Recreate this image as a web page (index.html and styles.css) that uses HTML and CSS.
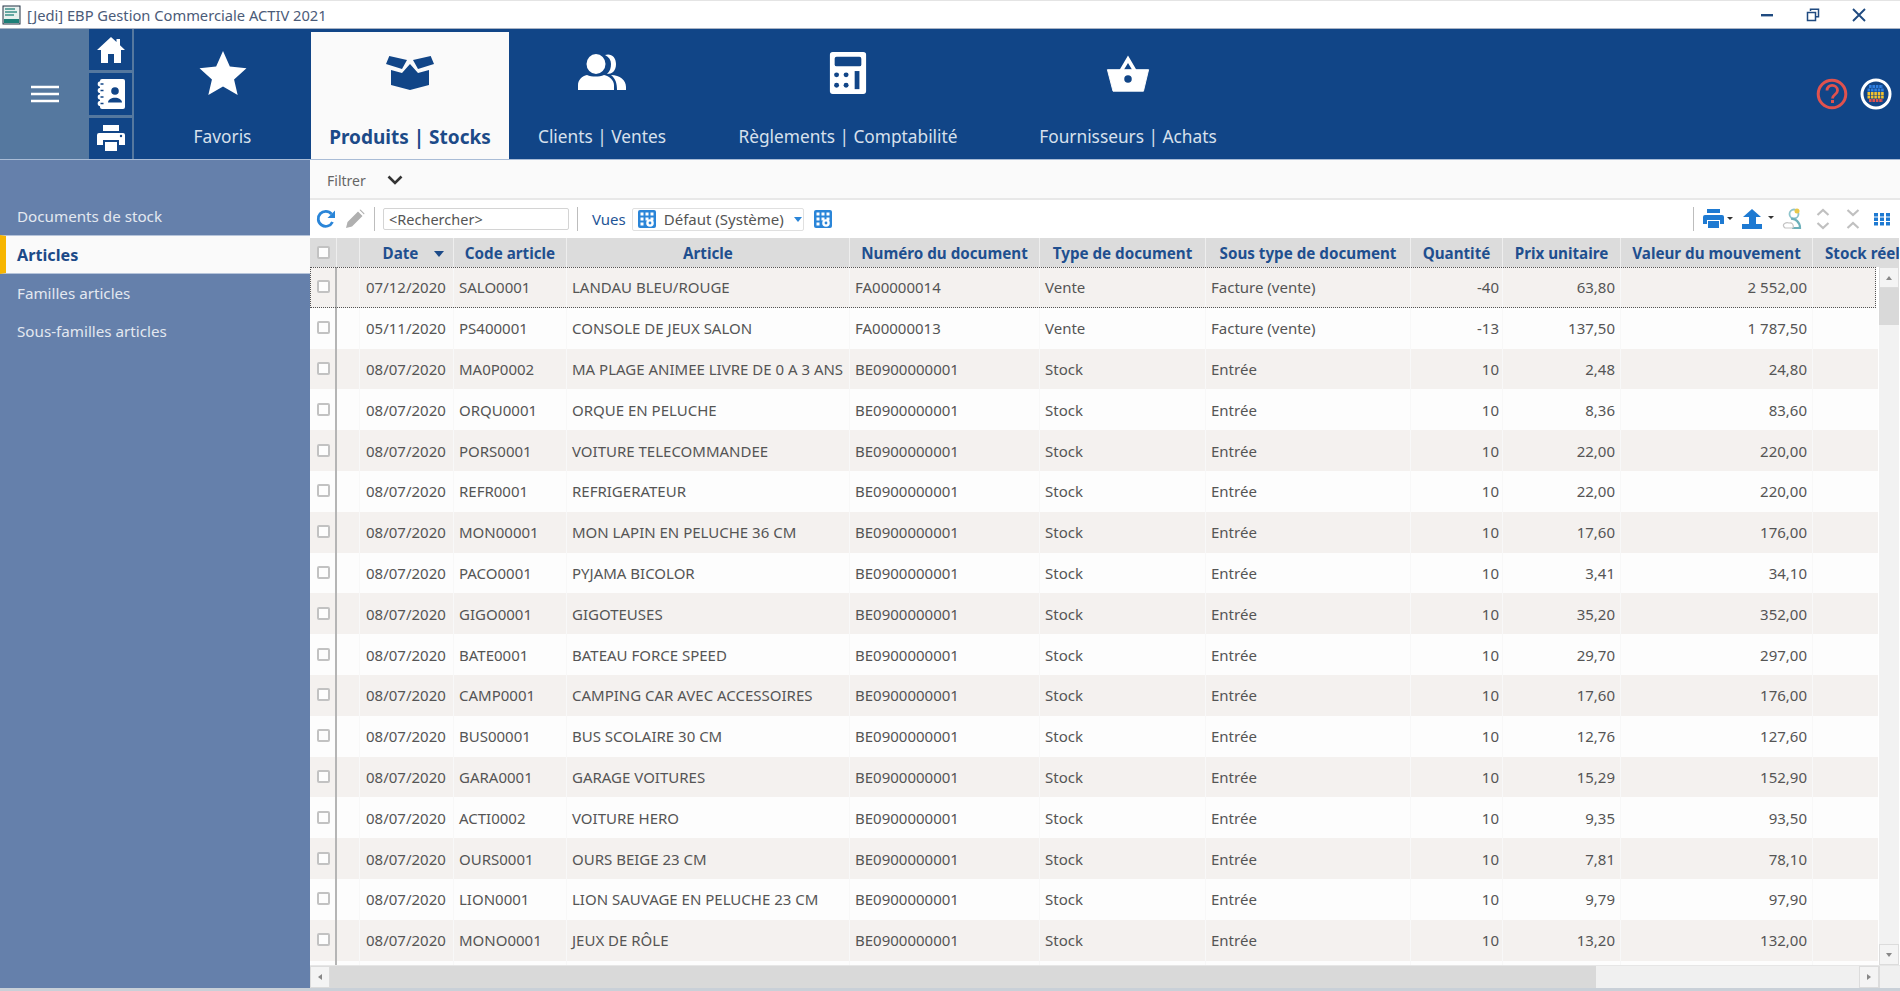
FILE: index.html
```html
<!DOCTYPE html>
<html lang="fr">
<head>
<meta charset="utf-8">
<title>EBP Gestion Commerciale ACTIV 2021</title>
<link rel="stylesheet" href="styles.css">
</head>
<body>
<div class="app">
  <div class="titlebar">
    <svg class="app-icon" viewBox="0 0 20 20" width="20" height="20"><rect x="1" y="1" width="17" height="18" fill="#e8f0ee" stroke="#234"/><rect x="2" y="14" width="15" height="4" fill="#1d7f78"/><path d="M3 4h10M3 7h12M3 10h9" stroke="#3a8f88" stroke-width="1.5"/></svg>
    <span class="title-text">[Jedi] EBP Gestion Commerciale ACTIV 2021</span>
    <div class="win-btns">
      <svg viewBox="0 0 14 14" width="14" height="14"><rect x="1" y="6" width="12" height="2.4" fill="#1f4a80"/></svg>
      <svg viewBox="0 0 14 14" width="14" height="14"><path d="M4.5 3V1.2h8v7.6H10M1.5 4.5h8v8h-8z" fill="none" stroke="#1f4a80" stroke-width="1.5"/></svg>
      <svg viewBox="0 0 14 14" width="14" height="14"><path d="M1 1l12 12M13 1L1 13" stroke="#1f4a80" stroke-width="1.9"/></svg>
    </div>
  </div>

  <header class="ribbon">
    <div class="menu-zone">
      <svg viewBox="0 0 30 20" width="30" height="20"><path d="M1 3h28M1 10h28M1 17h28" stroke="#fff" stroke-width="2.4"/></svg>
    </div>
    <div class="quick">
      <div class="quick-btn"><svg viewBox="0 0 28 26" width="28" height="26"><path d="M14 0L0 13h4v13h7v-9h6v9h7V13h4l-5-4.800V2h-3.500v3z" fill="#fff"/></svg></div>
      <div class="quick-btn"><svg viewBox="0 0 28 30" width="28" height="30"><rect x="3" y="0" width="25" height="30" rx="2" fill="#fff"/><circle cx="3.500" cy="5" r="2.800" fill="#fff"/><circle cx="3.500" cy="11.500" r="2.800" fill="#fff"/><circle cx="3.500" cy="18" r="2.800" fill="#fff"/><circle cx="3.500" cy="24.500" r="2.800" fill="#fff"/><path d="M3.500 5h3M3.500 11.500h3M3.500 18h3M3.500 24.500h3" stroke="#114587" stroke-width="1.300"/><circle cx="18" cy="12" r="3.800" fill="#114587"/><path d="M11 23.500c0-6.500 14-6.500 14 0z" fill="#114587"/></svg></div>
      <div class="quick-btn"><svg viewBox="0 0 30 28" width="30" height="28"><path d="M7 1h16v6H7zM3 9h24a2 2 0 0 1 2 2v10h-6v-5H7v5H1V11a2 2 0 0 1 2-2zM9 18h12v9H9z" fill="#fff"/><circle cx="25" cy="12" r="1.200" fill="#114587"/></svg></div>
    </div>
    <nav class="tabs">
      <a class="tab tab-fav">
        <svg viewBox="0 -1 48 47" width="48" height="46"><path d="M24 1l7 15.800 17 1.800-12.700 11.500L39 46 24 37.400 9 46l3.700-15.900L0 18.600l17-1.800z" fill="#fff"/></svg>
        <span>Favoris</span>
      </a>
      <a class="tab tab-active">
        <svg viewBox="0 -7 48 46" width="48" height="46"><path d="M0 8L3.300 0 21 4 16 13zM48 8L44.700 0 27 4 32 13z" fill="#114587"/><path d="M5 14l11 3 8-9 8 9 11-3v15l-19 5-19-5z" fill="#114587"/></svg>
        <span>Produits | Stocks</span>
      </a>
      <a class="tab tab-cli">
        <svg viewBox="0 -5 48 46" width="48" height="46"><path d="M27 1c6-2 11 2 11 9s-4 10-9 10c3-3 4-6 4-10s-2-7-6-9z" fill="#fff"/><path d="M33 21c9 0 15 5 15 12v3h-9c0-6-1-11-6-15z" fill="#fff"/><ellipse cx="18" cy="10" rx="9.500" ry="10" fill="#fff"/><path d="M0 36v-5c0-5 4-9 9-10 5 2 12 2 17 0 5 1 10 5 10 10v5z" fill="#fff"/></svg>
        <span>Clients | Ventes</span>
      </a>
      <a class="tab tab-reg">
        <svg viewBox="-1 -2 42 48" width="40" height="46"><rect x="1" y="1" width="38" height="44" rx="3" fill="#fff"/><rect x="6" y="6" width="28" height="10" rx="2" fill="#114587"/><circle cx="8" cy="25" r="2.600" fill="#114587"/><circle cx="18" cy="25" r="2.600" fill="#114587"/><circle cx="8" cy="36" r="2.600" fill="#114587"/><circle cx="18" cy="36" r="2.600" fill="#114587"/><rect x="27" y="21" width="5" height="19" fill="#114587"/></svg>
        <span>Règlements | Comptabilité</span>
      </a>
      <a class="tab tab-four">
        <svg viewBox="-1.500 -4 47 49" width="44" height="46"><path d="M22 3l10 17h-4.500L22 11l-5.500 9H12z" fill="#fff"/><path d="M0 18h44l-5.500 23H6z" fill="#fff" stroke="#fff" stroke-linejoin="round"/><circle cx="22" cy="28" r="4" fill="#114587"/></svg>
        <span>Fournisseurs | Achats</span>
      </a>
    </nav>
    <div class="ribbon-end">
      <svg viewBox="0 0 32 32" width="32" height="32"><circle cx="16" cy="16" r="13.800" fill="none" stroke="#e0524e" stroke-width="3"/><path d="M11 12.500c0-7 10.500-6.500 10.500 0 0 4-5 4-5 8" fill="none" stroke="#e0524e" stroke-width="2.800"/><rect x="15" y="22" width="3" height="3" fill="#e0524e"/></svg>
      <svg viewBox="0 0 32 32" width="32" height="32"><circle cx="16" cy="16" r="14" fill="#114587" stroke="#fff" stroke-width="3"/><path d="M9 8.500h14M7.500 12h17" stroke="#2f7fe0" stroke-width="3" stroke-dasharray="2.600 .8"/><path d="M7.500 15.500h17M7.500 19h17" stroke="#f2c230" stroke-width="3" stroke-dasharray="2.600 .8"/><path d="M9 22.500h14" stroke="#e0524e" stroke-width="3" stroke-dasharray="2.600 .8"/></svg>
    </div>
  </header>

  <div class="main">
    <aside class="side">
      <a class="side-item">Documents de stock</a>
      <a class="side-item side-active">Articles</a>
      <a class="side-item">Familles articles</a>
      <a class="side-item">Sous-familles articles</a>
    </aside>
    <section class="content">
      <div class="filter">
        <span>Filtrer</span>
        <svg viewBox="0 0 16 10" width="16" height="10"><path d="M1.500 1.500L8 8l6.500-6.500" fill="none" stroke="#333" stroke-width="2.600"/></svg>
      </div>
      <div class="toolbar">
        <svg class="tb-refresh" viewBox="0 0 20 20" width="20" height="20"><path d="M16.500 13a7.500 7.500 0 1 1-1-8" fill="none" stroke="#2a85d8" stroke-width="2.800"/><path d="M19 1.500V9h-7.500z" fill="#2a85d8"/></svg>
        <svg class="tb-pencil" viewBox="0 0 20 20" width="20" height="20"><path d="M1 19l1.500-6L13 2.500l4.500 4.500L7 17.500zM14.500 1l1-.5 4 4-.5 1z" fill="#b0b0b0"/></svg>
        <i class="sep"></i>
        <div class="search">&lt;Rechercher&gt;</div>
        <i class="sep"></i>
        <span class="vues">Vues</span>
        <div class="combo">
          <svg viewBox="0 0 18 18" width="18" height="18"><rect width="18" height="18" rx="2" fill="#2a85d8"/><path d="M2.500 2.500h3v3h-3zM7.500 2.500h3v3h-3zM12.500 2.500h3v3h-3zM2.500 7.500h3v3h-3zM7.500 7.500h3v3h-3zM12.500 7.500h3v3h-3zM2.500 12.500h3v3h-3z" fill="#fff"/><circle cx="12" cy="13" r="3.800" fill="#fff"/><circle cx="12" cy="13" r="1.400" fill="#2a85d8"/></svg>
          <span class="combo-text">Défaut (Système)</span>
          <i class="caret"></i>
        </div>
        <svg class="tb-views" viewBox="0 0 18 18" width="18" height="18"><rect width="18" height="18" rx="2" fill="#2a85d8"/><path d="M2.500 2.500h3v3h-3zM7.500 2.500h3v3h-3zM12.500 2.500h3v3h-3zM2.500 7.500h3v3h-3zM7.500 7.500h3v3h-3zM12.500 7.500h3v3h-3zM2.500 12.500h3v3h-3z" fill="#fff"/><circle cx="12" cy="13" r="3.800" fill="#fff"/><circle cx="12" cy="13" r="1.400" fill="#2a85d8"/></svg>
        <div class="tb-right">
          <i class="sep"></i>
          <svg class="tb-print" viewBox="0 0 30 20" width="30" height="20"><path d="M4 0h13v4H4zM2 6h17a2 2 0 0 1 2 2v7h-4v-4H4v4H0V8a2 2 0 0 1 2-2zM5 12h11v7H5z" fill="#1e7ad2"/><path d="M24 8h6l-3 3z" fill="#333"/></svg>
          <svg class="tb-up" viewBox="0 0 32 20" width="32" height="20"><path d="M10 0l9 8h-5v7H7V8H1z" fill="#1e7ad2"/><rect x="0" y="15" width="20" height="5" fill="#1e7ad2"/><path d="M26 7h6l-3 3z" fill="#333"/></svg>
          <svg class="tb-user" viewBox="0 0 20 22" width="20" height="22"><circle cx="12" cy="6" r="4.500" fill="none" stroke="#8fc4cc" stroke-width="1.800"/><circle cx="15" cy="3" r="2.500" fill="#e8c84a"/><path d="M9 11c4-1 9 3 9 9H10" fill="none" stroke="#6db0ba" stroke-width="2.200"/><path d="M2 19c-2-3 2-5 5-4 3-1 5 2 4 5H3z" fill="#fff" stroke="#c4c4c4" stroke-width="1.200"/></svg>
          <svg class="tb-exp" viewBox="0 0 14 22" width="14" height="22"><path d="M1.500 7L7 2l5.500 5M1.500 15L7 20l5.500-5" fill="none" stroke="#c0c0c0" stroke-width="2.200"/></svg>
          <svg class="tb-col" viewBox="0 0 14 22" width="14" height="22"><path d="M1.500 2L7 7l5.500-5M1.500 20L7 15l5.500 5" fill="none" stroke="#c0c0c0" stroke-width="2.200"/></svg>
          <svg class="tb-grid" viewBox="0 0 16 14" width="16" height="14"><path d="M0 1h4v3.500H0zM6 1h4v3.500H6zM12 1h4v3.500h-4zM0 5.500h4V9H0zM6 5.500h4V9H6zM12 5.500h4V9h-4zM0 10h4v3.500H0zM6 10h4v3.500H6zM12 10h4v3.500h-4z" fill="#1e7ad2"/></svg>
        </div>
      </div>

      <div class="grid">
        <div class="cols head">
          <div class="hc"><i class="chk"></i></div><div class="hc"></div>
          <div class="hc hc-date">Date<i class="sort"></i></div>
          <div class="hc">Code article</div><div class="hc">Article</div><div class="hc">Numéro du document</div><div class="hc">Type de document</div><div class="hc">Sous type de document</div><div class="hc">Quantité</div><div class="hc">Prix unitaire</div><div class="hc">Valeur du mouvement</div><div class="hc hc-last">Stock réel</div>
        </div>
        <div class="grid-body">
          <div class="rows">
            <div class="cols row row-focus"><div class="c ck"><i class="chk"></i></div><div class="c bl"></div><div class="c dt">07/12/2020</div><div class="c">SALO0001</div><div class="c">LANDAU BLEU/ROUGE</div><div class="c">FA00000014</div><div class="c">Vente</div><div class="c">Facture (vente)</div><div class="c r qt">-40</div><div class="c r">63,80</div><div class="c r">2 552,00</div><div class="c"></div></div>
            <div class="cols row"><div class="c ck"><i class="chk"></i></div><div class="c bl"></div><div class="c dt">05/11/2020</div><div class="c">PS400001</div><div class="c">CONSOLE DE JEUX SALON</div><div class="c">FA00000013</div><div class="c">Vente</div><div class="c">Facture (vente)</div><div class="c r qt">-13</div><div class="c r">137,50</div><div class="c r">1 787,50</div><div class="c"></div></div>
            <div class="cols row"><div class="c ck"><i class="chk"></i></div><div class="c bl"></div><div class="c dt">08/07/2020</div><div class="c">MA0P0002</div><div class="c">MA PLAGE ANIMEE LIVRE DE 0 A 3 ANS</div><div class="c">BE0900000001</div><div class="c">Stock</div><div class="c">Entrée</div><div class="c r qt">10</div><div class="c r">2,48</div><div class="c r">24,80</div><div class="c"></div></div>
            <div class="cols row"><div class="c ck"><i class="chk"></i></div><div class="c bl"></div><div class="c dt">08/07/2020</div><div class="c">ORQU0001</div><div class="c">ORQUE EN PELUCHE</div><div class="c">BE0900000001</div><div class="c">Stock</div><div class="c">Entrée</div><div class="c r qt">10</div><div class="c r">8,36</div><div class="c r">83,60</div><div class="c"></div></div>
            <div class="cols row"><div class="c ck"><i class="chk"></i></div><div class="c bl"></div><div class="c dt">08/07/2020</div><div class="c">PORS0001</div><div class="c">VOITURE TELECOMMANDEE</div><div class="c">BE0900000001</div><div class="c">Stock</div><div class="c">Entrée</div><div class="c r qt">10</div><div class="c r">22,00</div><div class="c r">220,00</div><div class="c"></div></div>
            <div class="cols row"><div class="c ck"><i class="chk"></i></div><div class="c bl"></div><div class="c dt">08/07/2020</div><div class="c">REFR0001</div><div class="c">REFRIGERATEUR</div><div class="c">BE0900000001</div><div class="c">Stock</div><div class="c">Entrée</div><div class="c r qt">10</div><div class="c r">22,00</div><div class="c r">220,00</div><div class="c"></div></div>
            <div class="cols row"><div class="c ck"><i class="chk"></i></div><div class="c bl"></div><div class="c dt">08/07/2020</div><div class="c">MON00001</div><div class="c">MON LAPIN EN PELUCHE 36 CM</div><div class="c">BE0900000001</div><div class="c">Stock</div><div class="c">Entrée</div><div class="c r qt">10</div><div class="c r">17,60</div><div class="c r">176,00</div><div class="c"></div></div>
            <div class="cols row"><div class="c ck"><i class="chk"></i></div><div class="c bl"></div><div class="c dt">08/07/2020</div><div class="c">PACO0001</div><div class="c">PYJAMA BICOLOR</div><div class="c">BE0900000001</div><div class="c">Stock</div><div class="c">Entrée</div><div class="c r qt">10</div><div class="c r">3,41</div><div class="c r">34,10</div><div class="c"></div></div>
            <div class="cols row"><div class="c ck"><i class="chk"></i></div><div class="c bl"></div><div class="c dt">08/07/2020</div><div class="c">GIGO0001</div><div class="c">GIGOTEUSES</div><div class="c">BE0900000001</div><div class="c">Stock</div><div class="c">Entrée</div><div class="c r qt">10</div><div class="c r">35,20</div><div class="c r">352,00</div><div class="c"></div></div>
            <div class="cols row"><div class="c ck"><i class="chk"></i></div><div class="c bl"></div><div class="c dt">08/07/2020</div><div class="c">BATE0001</div><div class="c">BATEAU FORCE SPEED</div><div class="c">BE0900000001</div><div class="c">Stock</div><div class="c">Entrée</div><div class="c r qt">10</div><div class="c r">29,70</div><div class="c r">297,00</div><div class="c"></div></div>
            <div class="cols row"><div class="c ck"><i class="chk"></i></div><div class="c bl"></div><div class="c dt">08/07/2020</div><div class="c">CAMP0001</div><div class="c">CAMPING CAR AVEC ACCESSOIRES</div><div class="c">BE0900000001</div><div class="c">Stock</div><div class="c">Entrée</div><div class="c r qt">10</div><div class="c r">17,60</div><div class="c r">176,00</div><div class="c"></div></div>
            <div class="cols row"><div class="c ck"><i class="chk"></i></div><div class="c bl"></div><div class="c dt">08/07/2020</div><div class="c">BUS00001</div><div class="c">BUS SCOLAIRE 30 CM</div><div class="c">BE0900000001</div><div class="c">Stock</div><div class="c">Entrée</div><div class="c r qt">10</div><div class="c r">12,76</div><div class="c r">127,60</div><div class="c"></div></div>
            <div class="cols row"><div class="c ck"><i class="chk"></i></div><div class="c bl"></div><div class="c dt">08/07/2020</div><div class="c">GARA0001</div><div class="c">GARAGE VOITURES</div><div class="c">BE0900000001</div><div class="c">Stock</div><div class="c">Entrée</div><div class="c r qt">10</div><div class="c r">15,29</div><div class="c r">152,90</div><div class="c"></div></div>
            <div class="cols row"><div class="c ck"><i class="chk"></i></div><div class="c bl"></div><div class="c dt">08/07/2020</div><div class="c">ACTI0002</div><div class="c">VOITURE HERO</div><div class="c">BE0900000001</div><div class="c">Stock</div><div class="c">Entrée</div><div class="c r qt">10</div><div class="c r">9,35</div><div class="c r">93,50</div><div class="c"></div></div>
            <div class="cols row"><div class="c ck"><i class="chk"></i></div><div class="c bl"></div><div class="c dt">08/07/2020</div><div class="c">OURS0001</div><div class="c">OURS BEIGE 23 CM</div><div class="c">BE0900000001</div><div class="c">Stock</div><div class="c">Entrée</div><div class="c r qt">10</div><div class="c r">7,81</div><div class="c r">78,10</div><div class="c"></div></div>
            <div class="cols row"><div class="c ck"><i class="chk"></i></div><div class="c bl"></div><div class="c dt">08/07/2020</div><div class="c">LION0001</div><div class="c">LION SAUVAGE EN PELUCHE 23 CM</div><div class="c">BE0900000001</div><div class="c">Stock</div><div class="c">Entrée</div><div class="c r qt">10</div><div class="c r">9,79</div><div class="c r">97,90</div><div class="c"></div></div>
            <div class="cols row"><div class="c ck"><i class="chk"></i></div><div class="c bl"></div><div class="c dt">08/07/2020</div><div class="c">MONO0001</div><div class="c">JEUX DE RÔLE</div><div class="c">BE0900000001</div><div class="c">Stock</div><div class="c">Entrée</div><div class="c r qt">10</div><div class="c r">13,20</div><div class="c r">132,00</div><div class="c"></div></div>
            <div class="cols row"><div class="c ck"></div><div class="c bl"></div><div class="c"></div><div class="c"></div><div class="c"></div><div class="c"></div><div class="c"></div><div class="c"></div><div class="c"></div><div class="c"></div><div class="c"></div><div class="c"></div></div>
          </div>
          <div class="vscroll">
            <div class="sb-btn"><i class="tri-up"></i></div>
            <div class="v-thumb"></div>
            <div class="v-track"></div>
            <div class="sb-btn"><i class="tri-down"></i></div>
          </div>
        </div>
        <div class="hscroll">
          <div class="sb-btn"><i class="tri-left"></i></div>
          <div class="h-thumb"></div>
          <div class="h-track"></div>
          <div class="sb-btn"><i class="tri-right"></i></div>
          <div class="sb-corner"></div>
        </div>
      </div>
    </section>
  </div>
</div>
</body>
</html>
```

FILE: styles.css
```css
* { box-sizing: border-box; }
html, body { margin: 0; padding: 0; height: 100%; overflow: hidden; }
body { font-family: "Noto Sans", "DejaVu Sans", sans-serif; font-size: 15px; color: #555; background: #fff; }
.app { width: 1900px; height: 991px; display: flex; flex-direction: column; overflow: hidden; background: #c9d0d8; padding-bottom: 3px; }

.titlebar { height: 29px; flex: none; display: flex; align-items: center; padding-left: 2px; background: #fff; border-top: 1px solid #e4e4e4; border-bottom: 1px solid #a9b3c4; }
.app-icon { margin-right: 5px; }
.title-text { font-size: 14.700px; color: #4b5b78; }
.win-btns { margin-left: auto; display: flex; gap: 32px; padding-right: 34px; align-items: center; }

.ribbon { height: 131px; flex: none; display: flex; background: #114587; border-bottom: 1px solid #a9bcd6; }
.menu-zone { width: 89px; background: #55789f; display: flex; align-items: center; justify-content: center; }
.quick { width: 45px; display: flex; flex-direction: column; gap: 3px; background: #55789f; padding-right: 2px; }
.quick-btn { flex: 1; background: #114587; display: flex; align-items: center; justify-content: center; }
.tabs { display: flex; flex: none; padding-top: 3px; }
.tab { display: flex; flex-direction: column; align-items: center; justify-content: space-between; padding: 17px 0 10px; color: #d7e0ec; font-size: 17.300px; line-height: 24px; white-space: nowrap; }
.tab-fav { width: 177px; }
.tab-active { width: 198px; background: #fafafa; color: #1c4a88; font-weight: 700; font-size: 19px; }
.tab-cli { width: 186px; }
.tab-reg { width: 306px; }
.tab-four { width: 254px; }
.ribbon-end { margin-left: auto; display: flex; gap: 12px; padding: 0 8px 0 0; align-items: center; }

.main { flex: 1; display: flex; min-height: 0; }
.side { width: 310px; flex: none; background: #6580ab; padding-top: 37px; display: flex; flex-direction: column; }
.side-item { height: 38.400px; display: flex; align-items: center; padding-left: 17px; color: #e3e8f0; font-size: 15.200px; }
.side-active { background: #fafafa; color: #1c4a88; font-weight: 700; font-size: 16.200px; border-left: 6px solid #f7b500; padding-left: 11px; border-top: 1px solid #b6c4da; border-bottom: 1px solid #b6c4da; }

.content { flex: 1; min-width: 0; display: flex; flex-direction: column; background: #fff; }
.filter { height: 40px; flex: none; display: flex; align-items: center; gap: 21px; padding: 2px 0 0 17px; background: #fafafa; border-bottom: 2px solid #e8e8e8; color: #666; font-size: 14px; }
.toolbar { height: 38px; flex: none; display: flex; align-items: center; background: #fff; padding-left: 6px; }
.tb-refresh { margin-right: 9px; }
.tb-pencil { margin-right: 9px; }
.sep { width: 1px; height: 24px; background: #bdbdbd; flex: none; }
.search { width: 186px; height: 22px; margin: 0 8px; border: 1px solid #d4d4d4; border-radius: 2px; padding-left: 5px; font-size: 14.500px; line-height: 20px; color: #555; }
.vues { margin: 0 6px 0 14px; color: #1f5596; font-size: 15px; }
.combo { width: 172px; height: 23px; flex: none; display: flex; align-items: center; gap: 8px; padding-left: 5px; border: 1px solid #e0e0e0; border-radius: 2px; color: #555; font-size: 15px; white-space: nowrap; }
.combo-text { flex: none; }
.caret { flex: none; border: 4px solid transparent; border-top: 5px solid #2a85d8; border-bottom: 0; margin-left: 2px; }
.tb-views { margin-left: 10px; }
.tb-right { margin-left: auto; display: flex; align-items: center; padding-right: 10px; }
.tb-print { margin-left: 9px; }
.tb-up { margin-left: 9px; }
.tb-user { margin-left: 8px; }
.tb-exp { margin-left: 14px; }
.tb-col { margin-left: 16px; }
.tb-grid { margin-left: 14px; }

.grid { flex: 1; min-height: 0; display: flex; flex-direction: column; overflow: hidden; }
.cols { display: grid; grid-template-columns: 27px 23px 94px 113px 283px 190px 166px 205px 92px 118px 192px 86px; width: 1589px; flex: none; }
.head { height: 29px; background: #dcdcdc; }
.hc { display: flex; align-items: center; justify-content: center; font-weight: 700; color: #1f4f8f; font-size: 15.200px; white-space: nowrap; border-right: 1px solid #eeeeee; }
.hc-last { justify-content: flex-start; padding-left: 12px; border-right: 0; }
.hc-date { gap: 16px; padding-left: 14px; }
.sort { border: 5px solid transparent; border-top: 6px solid #1c4a88; border-bottom: 0; margin-top: 2px; }
.chk { display: block; width: 13px; height: 13px; background: #fdfdfd; border: 2px solid #c2c2c2; border-radius: 2px; }

.grid-body { flex: 1; min-height: 0; display: flex; }
.rows { width: 1568px; flex: none; overflow: hidden; }
.row { height: 40.800px; }
.row:nth-child(odd) { background: #f4f1ef; }
.row:nth-child(even) { background: #fdfdfd; }
.row-focus { outline: 1px dotted #555; outline-offset: -1px; width: 1566px; }
.c { display: flex; align-items: center; padding-left: 5px; white-space: nowrap; border-right: 1px solid #f8f8f8; color: #555; font-size: 15px; overflow: hidden; }
.c.dt { padding-left: 6px; }
.c.r { justify-content: flex-end; padding: 0 5px 0 0; }
.c.qt { padding-right: 3px; }
.c.ck { justify-content: center; padding: 0 0 1px 1px; border-right: 2px solid #b5b5b5; }

.vscroll { width: 21px; flex: none; display: flex; flex-direction: column; background: #f2f2f2; border-left: 1px solid #fff; }
.v-thumb { height: 37px; background: #d9d9d9; }
.v-track { flex: 1; }
.vscroll .sb-btn { height: 21px; width: 100%; }
.sb-btn { flex: none; width: 20px; background: #f4f4f4; border: 1px solid #dcdcdc; display: flex; align-items: center; justify-content: center; }
.tri-up { border: 3px solid transparent; border-bottom: 4px solid #888; border-top: 0; }
.tri-down { border: 3px solid transparent; border-top: 4px solid #888; border-bottom: 0; }
.tri-left { border: 3px solid transparent; border-right: 4px solid #888; border-left: 0; }
.tri-right { border: 3px solid transparent; border-left: 4px solid #888; border-right: 0; }
.hscroll { height: 23px; flex: none; display: flex; background: #f0f0f0; border-top: 1px solid #e6e6e6; }
.h-thumb { width: 1266px; background: #d9d9d9; }
.h-track { flex: 1; background: #f0f0f0; }
.sb-corner { width: 21px; background: #f0f0f0; border-left: 1px solid #dcdcdc; }
```
